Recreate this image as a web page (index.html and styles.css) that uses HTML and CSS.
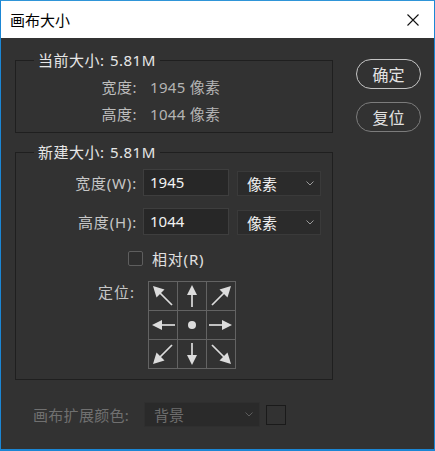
FILE: index.html
```html
<!DOCTYPE html>
<html lang="zh">
<head>
<meta charset="utf-8">
<title>画布大小</title>
<link rel="stylesheet" href="styles.css">
</head>
<body>
<div class="window">
  <div class="titlebar">
    <span class="title">画布大小</span>
    <svg class="close" width="12" height="12" viewBox="0 0 12 12"><path d="M0.5 0.5 L11.5 11.5 M11.5 0.5 L0.5 11.5" stroke="#111" stroke-width="1.1" fill="none"/></svg>
  </div>
  <div class="content">
    <div class="main">
      <fieldset class="group g1">
        <legend>当前大小: 5.81M</legend>
        <div class="info">
          <span class="lbl">宽度:</span><span class="val">1945 像素</span>
          <span class="lbl">高度:</span><span class="val">1044 像素</span>
        </div>
      </fieldset>
      <fieldset class="group g2">
        <legend>新建大小: 5.81M</legend>
        <div class="fields">
          <span class="flbl">宽度(W):</span>
          <div class="input">1945</div>
          <div class="select"><span>像素</span><svg class="chev" width="8" height="5" viewBox="0 0 8 5"><path d="M0.5 0.5 L4 4 L7.5 0.5" stroke="#9a9a9a" fill="none"/></svg></div>
          <span class="flbl">高度(H):</span>
          <div class="input">1044</div>
          <div class="select"><span>像素</span><svg class="chev" width="8" height="5" viewBox="0 0 8 5"><path d="M0.5 0.5 L4 4 L7.5 0.5" stroke="#9a9a9a" fill="none"/></svg></div>
        </div>
        <div class="check"><span class="box"></span><span>相对(R)</span></div>
        <div class="anchor">
          <span class="alabel">定位:</span>
          <div class="grid">
            <div class="cell"><svg class="arr" viewBox="0 0 28 28"><path d="M23 23 L10 10" stroke="#dcdcdc" stroke-width="1.7"/><path d="M4 4 L15.5 7.5 L7.5 15.5 Z" fill="#dcdcdc"/></svg></div>
            <div class="cell"><svg class="arr" viewBox="0 0 28 28"><path d="M14 25 V11" stroke="#dcdcdc" stroke-width="1.7"/><path d="M14 3 L9 13 H19 Z" fill="#dcdcdc"/></svg></div>
            <div class="cell"><svg class="arr" viewBox="0 0 28 28"><path d="M5 23 L18 10" stroke="#dcdcdc" stroke-width="1.7"/><path d="M24 4 L12.5 7.5 L20.5 15.5 Z" fill="#dcdcdc"/></svg></div>
            <div class="cell"><svg class="arr" viewBox="0 0 28 28"><path d="M26 14 H12" stroke="#dcdcdc" stroke-width="1.7"/><path d="M3 14 L13 9 V19 Z" fill="#dcdcdc"/></svg></div>
            <div class="cell"><svg class="arr" viewBox="0 0 28 28"><circle cx="14" cy="14" r="4" fill="#dcdcdc"/></svg></div>
            <div class="cell"><svg class="arr" viewBox="0 0 28 28"><path d="M2 14 H16" stroke="#dcdcdc" stroke-width="1.7"/><path d="M25 14 L15 9 V19 Z" fill="#dcdcdc"/></svg></div>
            <div class="cell"><svg class="arr" viewBox="0 0 28 28"><path d="M23 5 L10 18" stroke="#dcdcdc" stroke-width="1.7"/><path d="M4 24 L7.5 12.5 L15.5 20.5 Z" fill="#dcdcdc"/></svg></div>
            <div class="cell"><svg class="arr" viewBox="0 0 28 28"><path d="M14 3 V17" stroke="#dcdcdc" stroke-width="1.7"/><path d="M14 25 L9 15 H19 Z" fill="#dcdcdc"/></svg></div>
            <div class="cell"><svg class="arr" viewBox="0 0 28 28"><path d="M5 5 L18 18" stroke="#dcdcdc" stroke-width="1.7"/><path d="M24 24 L12.5 20.5 L20.5 12.5 Z" fill="#dcdcdc"/></svg></div>
          </div>
        </div>
      </fieldset>
    </div>
    <div class="buttons">
      <button class="btn primary">确定</button>
      <button class="btn">复位</button>
    </div>
  </div>
  <div class="footer">
    <span class="flabel">画布扩展颜色:</span>
    <div class="dselect"><span>背景</span><svg class="chev" width="8" height="5" viewBox="0 0 8 5"><path d="M0.5 0.5 L4 4 L7.5 0.5" stroke="#5c5c5c" fill="none"/></svg></div>
    <span class="swatch"></span>
  </div>
</div>
</body>
</html>
```
FILE: styles.css
```css
* { box-sizing: border-box; }
html, body { margin: 0; padding: 0; background: #323232; }
body {
  font-family: "Noto Sans", "Noto Sans CJK SC", sans-serif;
  font-size: 15px;
}
.window {
  width: 435px;
  height: 451px;
  border: 1px solid #1b86d4;
  border-bottom-width: 2px;
  border-top-color: #2f95d8;
  background: #323232;
  display: flex;
  flex-direction: column;
}
.titlebar {
  height: 37px;
  flex: none;
  background: #ffffff;
  display: flex;
  align-items: center;
  justify-content: space-between;
  padding: 0 15px 0 9px;
}
.title {
  font-size: 15px;
  color: #000;
  line-height: 20px;
}
.close { display: block; }
.content {
  display: flex;
  padding: 12px 0 0 14px;
}
.main {
  width: 318px;
  display: flex;
  flex-direction: column;
  gap: 9px;
}
.group {
  margin: 0;
  padding: 0;
  min-width: 0;
  border: 1px solid #1f1f1f;
}
.group legend {
  margin-left: 18px;
  padding: 0 4px;
  font-size: 15px;
  line-height: 20px;
  color: #e6e6e6;
  letter-spacing: 0.5px;
  word-spacing: 1px;
}
.info {
  display: grid;
  grid-template-columns: 121px auto;
  column-gap: 13px;
  grid-auto-rows: 27px;
  align-items: center;
  padding: 3px 0 5px;
}
.info .lbl { text-align: right; color: #bdbdbd; letter-spacing: 0.5px; }
.info .val { color: #b4b4b4; letter-spacing: 0.3px; }
.fields {
  display: grid;
  grid-template-columns: 121px 92px 92px;
  grid-auto-rows: 27px;
  row-gap: 12px;
  align-items: center;
  padding-top: 7px;
}
.flbl { text-align: right; color: #c6c6c6; letter-spacing: 0.8px; }
.input {
  margin-left: 6px;
  height: 27px;
  width: 86px;
  background: #272727;
  border: 1px solid #3e3e3e;
  color: #f2f2f2;
  font-size: 15px;
  line-height: 25px;
  padding-left: 6px;
}
.select {
  margin-left: 8px;
  width: 84px;
  height: 25px;
  align-self: end;
  background: #2b2b2b;
  border: 1px solid #3a3a3a;
  color: #f0f0f0;
  font-size: 15px;
  display: flex;
  align-items: center;
  justify-content: space-between;
  padding: 0 6px 0 9px;
}
.chev { display: block; }
.check {
  display: flex;
  align-items: center;
  gap: 9px;
  padding-left: 112px;
  margin-top: 15px;
  color: #e0e0e0;
  font-size: 15px;
  letter-spacing: 0.8px;
  height: 16px;
}
.box {
  width: 15px;
  height: 15px;
  border: 1px solid #5e5e5e;
  border-radius: 2px;
  background: #2e2e2e;
}
.anchor {
  display: flex;
  align-items: flex-start;
  margin-top: 15px;
  padding-bottom: 10px;
}
.alabel {
  width: 121px;
  text-align: right;
  color: #c6c6c6;
  padding-right: 2px;
  letter-spacing: 1px;
}
.grid {
  margin-left: 11px;
  display: grid;
  grid-template-columns: repeat(3, 28px);
  grid-template-rows: repeat(3, 28px);
  gap: 1px;
  padding: 1px;
  background: #636363;
}
.cell {
  background: #323232;
  display: flex;
  align-items: center;
  justify-content: center;
}
.arr { width: 28px; height: 28px; display: block; }
.buttons {
  margin-left: 23px;
  padding-top: 9px;
  display: flex;
  flex-direction: column;
  gap: 13px;
}
.btn {
  width: 65px;
  height: 30px;
  border-radius: 15px;
  background: transparent;
  border: 1.5px solid #c4c4c4;
  color: #e2e2e2;
  font-family: "Noto Sans CJK SC", sans-serif;
  font-size: 16px;
  padding: 0;
  line-height: 26px;
}
.btn:not(.primary) { border-color: #7c7c7c; }
.footer {
  display: flex;
  align-items: center;
  padding: 22px 0 0 32px;
}
.flabel { color: #707070; width: 105px; font-size: 15px; letter-spacing: 0.3px; }
.dselect {
  margin-left: 6px;
  width: 116px;
  height: 25px;
  background: #2a2a2a;
  border: 1px solid #2f2f2f;
  color: #6e6e6e;
  font-size: 15px;
  display: flex;
  align-items: center;
  justify-content: space-between;
  padding: 0 6px 0 9px;
}
.swatch {
  margin-left: 6px;
  width: 20px;
  height: 20px;
  border: 1px solid #1a1a1a;
  background: #323232;
}
```
